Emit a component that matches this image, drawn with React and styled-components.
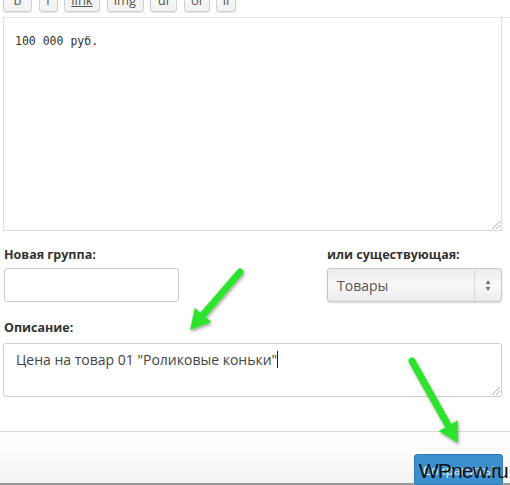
import React from "react"
import styled, { createGlobalStyle } from "styled-components"

const Global = createGlobalStyle`
  html, body { margin: 0; padding: 0; background: #fff; }
  body { font-family: "Open Sans", "Liberation Sans", sans-serif; }
`

const Page = styled.div`
  position: relative;
  width: 510px;
  height: 485px;
  overflow: hidden;
  background: #fff;
  display: flex;
  flex-direction: column;
`

const Editor = styled.div`
  margin: -12px 8px 0 3px;
  display: flex;
  flex-direction: column;
`

const Toolbar = styled.div`
  display: flex;
  gap: 6.5px;
  padding: 0 0 5px 0;
  border-bottom: 1px solid #e4e4e4;
  margin-right: -8px;
`

const ToolButton = styled.span`
  display: inline-flex;
  align-items: center;
  justify-content: center;
  height: 24px;
  width: ${p => p.$w}px;
  box-sizing: border-box;
  border: 1px solid #cfcfcf;
  border-radius: 3px;
  background: linear-gradient(#fdfdfd, #f1f1f1);
  box-shadow: 0 1px 0 #e6e6e6;
  color: #555;
  font-size: 13px;
  text-decoration: ${p => (p.$u ? "underline" : "none")};
`

const CodeArea = styled.div`
  height: 213px;
  border: 1px solid #dcdcdc;
  border-top: none;
  box-sizing: border-box;
  padding: 16px 11px;
  font-family: "DejaVu Sans Mono", "Liberation Mono", monospace;
  font-size: 11.5px;
  color: #333;
  position: relative;
`

const Grip = styled.span`
  position: absolute;
  right: 1px;
  bottom: 1px;
  width: 8px;
  height: 8px;
  background: linear-gradient(135deg, transparent 45%, #aaa 46%, #aaa 54%, transparent 55%, transparent 70%, #aaa 71%, #aaa 79%, transparent 80%);
`

const Row = styled.div`
  display: flex;
  justify-content: space-between;
  margin: 15px 8px 0 4px;
`

const Field = styled.div`
  display: flex;
  flex-direction: column;
  width: ${p => p.$w}px;
`

const Label = styled.label`
  font-weight: 700;
  font-size: 12.5px;
  color: #333;
  margin-bottom: 5px;
  line-height: 17px;
`

const TextInput = styled.div`
  height: 34px;
  box-sizing: border-box;
  border: 1px solid #ccc;
  border-radius: 3px;
  background: #fff;
`

const Select = styled.div`
  height: 34px;
  box-sizing: border-box;
  border: 1px solid #c8c8c8;
  border-radius: 3px;
  background: linear-gradient(#ececec, #f9f9f9 50%, #eaeaea);
  box-shadow: 0 1px 2px rgba(0, 0, 0, 0.15);
  display: flex;
  align-items: center;
  font-size: 14px;
  color: #555;
  padding-left: 9px;
`

const SelectText = styled.span`
  flex: 1;
`

const SelectArrows = styled.span`
  width: 26px;
  height: 100%;
  border-left: 1px solid #d6d6d6;
  display: flex;
  flex-direction: column;
  align-items: center;
  justify-content: center;
  font-size: 7px;
  line-height: 7px;
  color: #666;
`

const DescBlock = styled.div`
  margin: 17px 8px 0 3px;
  display: flex;
  flex-direction: column;
`

const DescLabel = styled(Label)`
  margin-left: 1px;
  margin-bottom: 7px;
`

const DescArea = styled.div`
  height: 54px;
  box-sizing: border-box;
  border: 1px solid #d0d0d0;
  border-radius: 3px;
  padding: 6px 12px;
  font-size: 14px;
  color: #444;
  position: relative;
`

const Caret = styled.span`
  display: inline-block;
  width: 1px;
  height: 17px;
  background: #222;
  vertical-align: -3px;
`

const Footer = styled.div`
  margin-top: auto;
  height: 51px;
  border-top: 1px solid #dcdcdc;
  border-bottom: 2px solid #9a9a9a;
  background: linear-gradient(#fff, #f9f9f9 60%, #f3f3f3);
  display: flex;
  align-items: flex-end;
  justify-content: flex-end;
  padding-right: 7px;
`

const SaveButton = styled.span`
  width: 89px;
  height: 31px;
  margin-bottom: -2px;
  box-sizing: border-box;
  border: 1px solid #2c79b5;
  border-radius: 3px;
  background: #3d90cf;
  color: #e9f3fb;
  font-size: 13px;
  display: flex;
  align-items: center;
  justify-content: center;
  position: relative;
`

const Watermark = styled.span`
  position: absolute;
  right: -6px;
  bottom: 1px;
  font-family: "Liberation Sans", Arial, sans-serif;
  font-size: 21px;
  letter-spacing: -0.8px;
  color: #111;
`

const Arrows = styled.svg`
  position: absolute;
  left: 0;
  top: 0;
  pointer-events: none;
`

const Arrow = ({ x1, y1, x2, y2 }) => {
  const dx = x2 - x1
  const dy = y2 - y1
  const len = Math.hypot(dx, dy)
  const ux = dx / len
  const uy = dy / len
  const bx = x2 - ux * 20
  const by = y2 - uy * 20
  const px = -uy * 11
  const py = ux * 11
  return (
    <g>
      <line x1={x1} y1={y1} x2={bx} y2={by} stroke="#2ee32e" strokeWidth="7" strokeLinecap="round" />
      <polygon points={`${x2},${y2} ${bx + px},${by + py} ${bx - px},${by - py}`} fill="#2ee32e" />
    </g>
  )
}

const tools = [
  { t: "b", w: 29 },
  { t: "i", w: 19 },
  { t: "link", w: 36 },
  { t: "img", w: 37 },
  { t: "ul", w: 27 },
  { t: "ol", w: 26 },
  { t: "li", w: 20 },
]

export default function App() {
  return (
    <Page>
      <Global />
      <Editor>
        <Toolbar>
          {tools.map(({ t, w }) => (
            <ToolButton key={t} $u={t === "link"} $w={w}>
              {t}
            </ToolButton>
          ))}
        </Toolbar>
        <CodeArea>
          100 000 руб.
          <Grip />
        </CodeArea>
      </Editor>

      <Row>
        <Field $w={175}>
          <Label>Новая группа:</Label>
          <TextInput />
        </Field>
        <Field $w={175}>
          <Label>или существующая:</Label>
          <Select>
            <SelectText>Товары</SelectText>
            <SelectArrows>
              <span>▲</span>
              <span>▼</span>
            </SelectArrows>
          </Select>
        </Field>
      </Row>

      <DescBlock>
        <DescLabel>Описание:</DescLabel>
        <DescArea>
          Цена на товар 01 "Роликовые коньки"<Caret />
          <Grip />
        </DescArea>
      </DescBlock>

      <Footer>
        <SaveButton>
          Сохранить!
          <Watermark>WPnew.ru</Watermark>
        </SaveButton>
      </Footer>

      <Arrows width="510" height="485">
        <defs>
          <filter id="sh" x="-20%" y="-20%" width="140%" height="140%">
            <feDropShadow dx="1" dy="2" stdDeviation="1.5" floodColor="#000" floodOpacity="0.35" />
          </filter>
        </defs>
        <g filter="url(#sh)">
          <Arrow x1={240} y1={272} x2={190} y2={330} />
          <Arrow x1={412} y1={361} x2={458} y2={443} />
        </g>
      </Arrows>
    </Page>
  )
}
